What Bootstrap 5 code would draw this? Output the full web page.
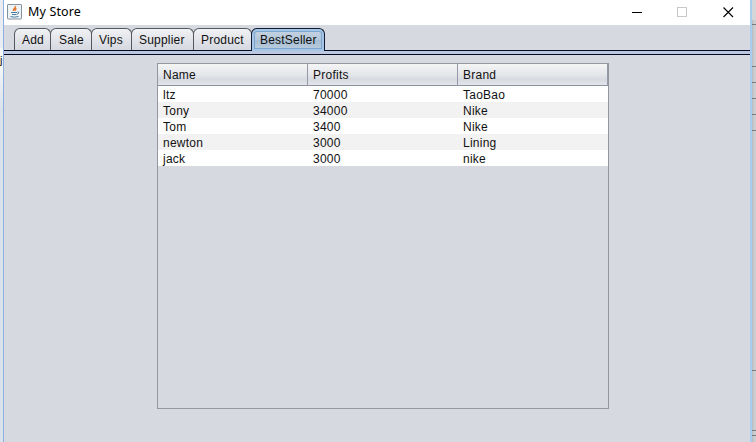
<!DOCTYPE html>
<html lang="en">
<head>
<meta charset="utf-8">
<title>My Store</title>
<link href="https://cdn.jsdelivr.net/npm/bootstrap@5.3.0/dist/css/bootstrap.min.css" rel="stylesheet">
<style>
body{height:442px;background:#cfd0d0;font:12px/16px "Liberation Sans",Arial,sans-serif;letter-spacing:.25px;color:#111}
.edge-left{width:3px;background:linear-gradient(#e9edf3 0 48px,#f4f6f8 48px 68px,#d9e1ec 110px)}
.edge-left span{padding-top:52px;letter-spacing:0;font-size:11px;line-height:16px}
.store-window{width:749px;border-left:1px solid #8fb0dc;border-right:2px solid #a9cdef;background:#d6d9e0}
.edge-right{width:4px;background:linear-gradient(90deg,#b4b9bf,#cdcdcd 2px)}
.edge-right svg{display:block}
.title-bar{height:25px;background:#fff}
.title-icon{margin-left:3px}
.title-text{font:12.5px/18px "Noto Sans","Open Sans",sans-serif;letter-spacing:.15px;margin-left:6px;margin-top:-1px;color:#000}
.caption-keys{margin-right:2px}
.store-tabs{height:25px;padding:3px 0 0 10px}
.store-tab{height:22px;border:1px solid #54585f;border-bottom:0;border-radius:6px 6px 0 0;background:linear-gradient(#f1f2f5,#e2e4e9 50%,#d5d8df);line-height:22px;margin-right:-1px;color:#111;padding:0 0 0 7px;text-align:left;letter-spacing:.2px;white-space:nowrap}
.store-tab.chosen{height:23px;border-color:#101a33;background:linear-gradient(#c8d6e4,#b3c6d9 50%,#a6bdd3 52%,#bfd0e0);box-shadow:inset 0 0 0 2px #a5c6e6,inset 0 0 0 3px #7ca6ce;z-index:1}
.tab-rule{height:5px;border-top:1px solid #050a26;border-bottom:1px solid #050a26;background:#bac7df}
.w-add{width:37px}.w-sale{width:42px;padding-left:8px}.w-vips{width:41px}.w-supplier{width:63px}.w-product{width:59px}.w-best{width:74px;padding-left:8px}
.grid-pane{width:452px;height:346px;margin:8px 0 0 153px;border:1px solid #9297a1}
.sales-table{width:450px;table-layout:fixed;border-collapse:separate;border-spacing:0}
.sales-table th{height:22px;font-weight:400;line-height:16px;padding:0 5px;border-right:1px solid #949aa7;border-bottom:1px solid #8b929e;background:linear-gradient(#f5f5f6,#e4e6ea 50%,#d7dae1 75%,#e3e5e9);vertical-align:middle}
.sales-table td{height:16px;line-height:14px;padding:2px 5px 0;background:#fff}
.sales-table tbody tr:nth-child(even) td{background:#f2f2f2}
</style>
<script src="https://cdn.jsdelivr.net/npm/bootstrap@5.3.0/dist/js/bootstrap.bundle.min.js"></script>
</head>
<body class="d-flex overflow-hidden">
<div class="edge-left flex-shrink-0"><span class="d-block">j</span></div>
<main class="store-window d-flex flex-column flex-shrink-0">
<header class="title-bar d-flex justify-content-between">
<div class="d-flex align-items-start pt-1">
<svg class="title-icon" width="15" height="16" viewBox="0 0 15 16" fill="none">
<rect x=".5" y=".5" width="14" height="14.500" rx=".5" fill="#eef3f6" stroke="#85929d"/>
<path d="M8.500 2C9 4 5.500 4.500 6.500 7M9.500 4.500C7.500 5.500 7.800 6 8.300 7" stroke="#e2742b" stroke-width="1.400"/>
<path d="M4 8.500h6M5 10.500h4.500M3.500 12.500q4 1.300 8 0M10.500 8q2-.2 1 1.300l-1.500 1" stroke="#4e7fa3"/>
</svg>
<span class="title-text text-nowrap">My Store</span>
</div>
<svg class="caption-keys" width="120" height="25" viewBox="0 0 120 25" fill="none">
<path d="M4 12.500h10" stroke="#000"/>
<rect x="49.500" y="7.500" width="9" height="9" stroke="#c8c8c8"/>
<path d="M95.500 7.500l9.500 9.500M105 7.500l-9.500 9.500" stroke="#000" stroke-width="1.100"/>
</svg>
</header>
<nav class="store-tabs d-flex" aria-label="Sections">
<button class="store-tab w-add">Add</button>
<button class="store-tab w-sale">Sale</button>
<button class="store-tab w-vips">Vips</button>
<button class="store-tab w-supplier">Supplier</button>
<button class="store-tab w-product">Product</button>
<button class="store-tab chosen w-best">BestSeller</button>
</nav>
<div class="tab-rule"></div>
<section class="grid-pane">
<table class="sales-table mb-0">
<thead><tr><th>Name</th><th>Profits</th><th>Brand</th></tr></thead>
<tbody>
<tr><td>ltz</td><td>70000</td><td>TaoBao</td></tr>
<tr><td>Tony</td><td>34000</td><td>Nike</td></tr>
<tr><td>Tom</td><td>3400</td><td>Nike</td></tr>
<tr><td>newton</td><td>3000</td><td>Lining</td></tr>
<tr><td>jack</td><td>3000</td><td>nike</td></tr>
</tbody>
</table>
</section>
</main>
<div class="edge-right flex-shrink-0">
<svg width="4" height="442" viewBox="0 0 4 442"><path d="M0 0h4v20H0z" fill="#d5d6d7"/><path d="M0 24.500h4M0 66.500h4M0 82.500h4M0 98.500h4M0 114.500h4M0 130.500h4M0 370.500h4M0 430.500h4M0 435.500h4" stroke="#77797c"/></svg>
</div>
</body>
</html>
